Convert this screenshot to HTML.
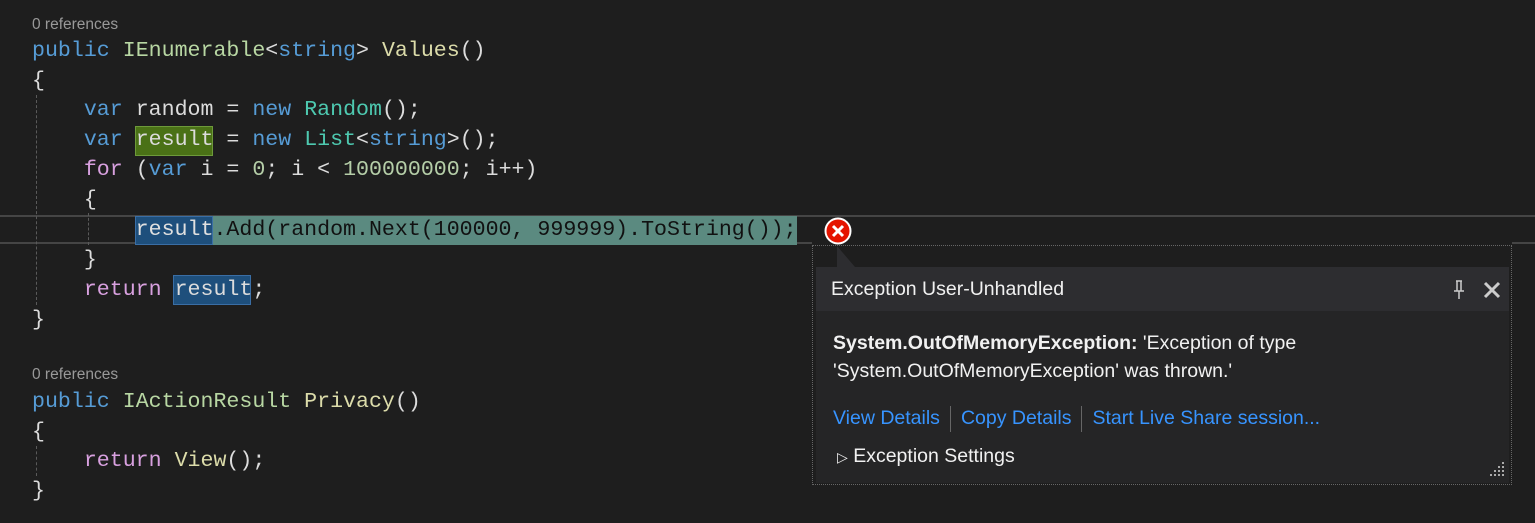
<!DOCTYPE html>
<html><head><style>
body{margin:0;width:1535px;height:523px;background:#1e1e1e;overflow:hidden;position:relative;font-family:"Liberation Mono",monospace;}
.l{position:absolute;left:32px;height:30px;line-height:30px;font-size:21.6px;color:#dcdcdc;white-space:pre;}
.cl{position:absolute;left:32px;font-family:"Liberation Sans",sans-serif;font-size:15.5px;color:#999;}
.k{color:#569cd6}.t{color:#4ec9b0}.i{color:#b8d7a3}.m{color:#dcdcaa}.n{color:#b5cea8}.c{color:#d8a0df}
.g{position:absolute;width:0;border-left:1px dashed #5a5a5a;}
.hl{position:absolute;background:#454545;height:2px}
.pop{font-family:"Liberation Sans",sans-serif;}
.sep{display:inline-block;width:1px;height:26px;background:#666;vertical-align:middle;margin:0 10px}
</style></head><body>
<div class="hl" style="left:0;top:215px;width:1535px"></div>
<div class="hl" style="left:0;top:242px;width:812px"></div>
<div class="hl" style="left:1512px;top:242px;width:23px"></div>
<div style="position:absolute;left:135px;top:216px;width:662px;height:29px;background:#5b8a80"></div>
<div style="position:absolute;left:135px;top:216px;width:76px;height:27px;background:#1e4f7c;border:1px solid #3a6ea5"></div>
<div style="position:absolute;left:135px;top:126px;width:76px;height:28px;background:#4a7116;border:1px solid #6d9a3a"></div>
<div style="position:absolute;left:173px;top:275px;width:76px;height:28px;background:#1e4f7c;border:1px solid #3a6ea5"></div>
<div class="g" style="left:36px;top:95px;height:210px"></div>
<div class="g" style="left:88px;top:213px;height:32px"></div>
<div class="g" style="left:36px;top:446px;height:30px"></div>

<div class="cl" style="top:16px">0 references</div>
<div class="l" style="top:36px"><span class="k">public</span> <span class="i">IEnumerable</span>&lt;<span class="k">string</span>&gt; <span class="m">Values</span>()</div>
<div class="l" style="top:66px">{</div>
<div class="l" style="top:95px">    <span class="k">var</span> random = <span class="k">new</span> <span class="t">Random</span>();</div>
<div class="l" style="top:125px">    <span class="k">var</span> result = <span class="k">new</span> <span class="t">List</span>&lt;<span class="k">string</span>&gt;();</div>
<div class="l" style="top:155px">    <span class="c">for</span> (<span class="k">var</span> i = <span class="n">0</span>; i &lt; <span class="n">100000000</span>; i++)</div>
<div class="l" style="top:185px">    {</div>
<div class="l" style="top:215px">        <span style="color:#e0e0e0">result</span><span style="color:#111">.Add(random.Next(100000, 999999).ToString());</span></div>
<div class="l" style="top:245px">    }</div>
<div class="l" style="top:275px">    <span class="c">return</span> result;</div>
<div class="l" style="top:305px">}</div>
<div class="cl" style="top:366px">0 references</div>
<div class="l" style="top:387px"><span class="k">public</span> <span class="i">IActionResult</span> <span class="m">Privacy</span>()</div>
<div class="l" style="top:417px">{</div>
<div class="l" style="top:446px">    <span class="c">return</span> <span class="m">View</span>();</div>
<div class="l" style="top:476px">}</div>

<svg style="position:absolute;left:823px;top:217px" width="30" height="30"><circle cx="15" cy="14" r="12.5" fill="#e51400" stroke="#fff" stroke-width="2"/><path d="M10 9L20 19M20 9L10 19" stroke="#fff" stroke-width="3"/></svg>
<div class="pop" style="position:absolute;left:812px;top:245px;width:698px;height:238px;border:1px dotted #666;background:#1e1e1e">
 <svg style="position:absolute;left:12px;top:0" width="30" height="22"><path d="M12 0L12 21L30 21Z" fill="#2d2d30"/></svg>
 <div style="position:absolute;left:3px;top:21px;width:693px;height:44px;background:#2d2d30"></div>
 <div style="position:absolute;left:3px;top:65px;width:693px;height:172px;background:#252526"></div>
 <div style="position:absolute;left:18px;top:32px;color:#f1f1f1;font-size:19.5px">Exception User-Unhandled</div>
 <svg style="position:absolute;left:638px;top:32px" width="50" height="24"><path d="M5 3h6M6 3v10M10 3v10M3 13h10M8 13v8" stroke="#ccc" stroke-width="1.5" fill="none"/><path d="M34 5L48 19M48 5L34 19" stroke="#ccc" stroke-width="3"/></svg>
 <div style="position:absolute;left:20px;top:83px;color:#f1f1f1;font-size:19.5px;line-height:28px"><b>System.OutOfMemoryException:</b> 'Exception of type<br>'System.OutOfMemoryException' was thrown.'</div>
 <div style="position:absolute;left:20px;top:157px;color:#3794ff;font-size:19.5px;white-space:nowrap;line-height:30px">View Details<span class="sep"></span>Copy Details<span class="sep"></span>Start Live Share session...</div>
 <div style="position:absolute;left:24px;top:199px;color:#f1f1f1;font-size:19.5px"><span style="font-size:14px">&#9655;</span> Exception Settings</div>
 <svg style="position:absolute;left:675px;top:216px" width="18" height="18"><g fill="#aaa"><rect x="14" y="0" width="2" height="2"/><rect x="10" y="4" width="2" height="2"/><rect x="14" y="4" width="2" height="2"/><rect x="6" y="8" width="2" height="2"/><rect x="10" y="8" width="2" height="2"/><rect x="14" y="8" width="2" height="2"/><rect x="2" y="12" width="2" height="2"/><rect x="6" y="12" width="2" height="2"/><rect x="10" y="12" width="2" height="2"/><rect x="14" y="12" width="2" height="2"/></g></svg>
</div>
</body></html>
